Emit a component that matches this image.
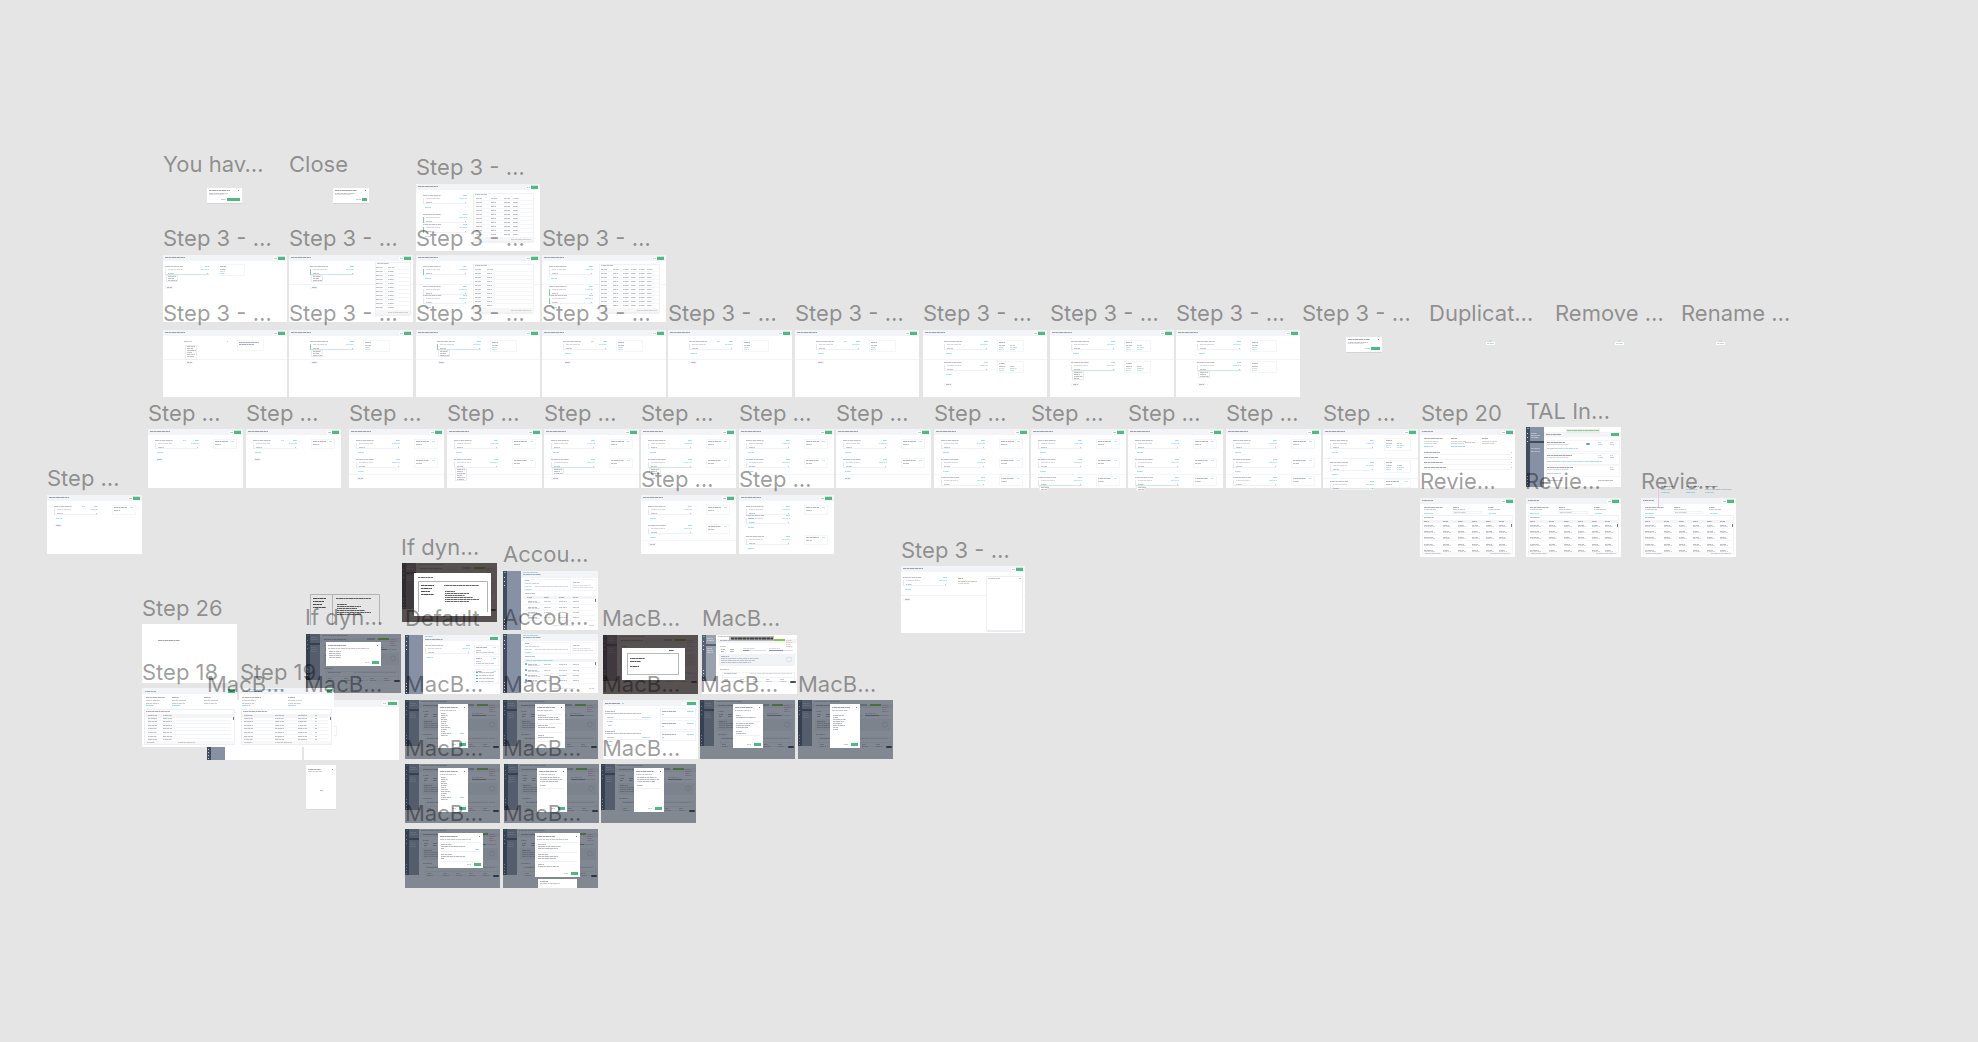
import React from "react";

const GREEN = "#4dbb7f";
const BLUE = "#5cc3dc";
const DARK = "#4b5261";

const DASHES = ["3 1 2 1 4 1", "2 1 4 1 1 1", "4 1 1 1 3 1", "1 1 3 1 2 1 3 1"];

/* A line of copy at overview zoom: a faint smear with darker short dashes. */
function Ink({ x, y, w, c = DARK, o = 0.45, h = 1 }) {
  if (!w) return null;
  return (
    <>
      <rect x={x} y={h > 1 ? y - 0.5 : y} width={w} height={h} fill={c} opacity={o * 0.4} />
      <line
        x1={x}
        x2={x + w}
        y1={y + 0.5}
        y2={y + 0.5}
        stroke={c}
        strokeOpacity={o * 0.4}
        strokeWidth={h}
        strokeDasharray={DASHES[(x * 3 + y + w) % 4]}
      />
    </>
  );
}

function Box({ x, y, w, h, f = "none", s, o = 1, r = 0 }) {
  return <rect x={s ? x + 0.5 : x} y={s ? y + 0.5 : y} width={w} height={h} fill={f} stroke={s} opacity={o} rx={r} />;
}

function Copy({ x, y, rows, c, o = 0.35, step = 2 }) {
  return rows.map((w, i) => <Ink key={i} x={x} y={y + i * step} w={w} c={c} o={o} />);
}

function Header({ w, title = 20 }) {
  return (
    <>
      <Box x={0} y={0} w={w} h={6} f="#f3f4f8" />
      <Ink x={2} y={2} w={title} o={0.75} />
      <Box x={w - 14} y={2} w={5} h={3} f="#fff" />
      <Ink x={w - 13} y={3} w={3} />
      <Box x={w - 9} y={1} w={7} h={4} f={GREEN} o={0.25} />
      <Box x={w - 9} y={2} w={7} h={3} f={GREEN} />
    </>
  );
}

/* Condition block: title, rule, field row, underline and link. */
function Block({ x, y, w = 44, green, bar, list, link = true, both }) {
  return (
    <>
      <Ink x={x} y={y} w={w < 40 ? 16 : 18} o={0.5} />
      <Ink x={x + w - 4} y={y} w={4} c={BLUE} o={0.9} />
      {both && <Ink x={x + w - 16} y={y} w={3} c={BLUE} o={0.7} />}
      <Box x={x} y={y + 3} w={1} h={6} f={bar ? GREEN : "#e6e8ec"} o={bar ? 0.7 : 1} />
      <Ink x={x + 3} y={y + 3} w={14} o={0.3} />
      <Ink x={x + w - 8} y={y + 3} w={8} c={BLUE} o={0.6} />
      <Ink x={x + 3} y={y + 7} w={6} o={0.45} />
      <Ink x={x + w - 2} y={y + 7} w={1} />
      <Box x={x + 1} y={y + 8} w={w - 1} h={1} f={green ? "#cdebdb" : "#f0f1f4"} />
      {link && !list && <Ink x={x + 2} y={y + 12} w={6} c={BLUE} o={0.8} />}
      {list && <List x={x + 1} y={y + 9} h={list} />}
    </>
  );
}

function List({ x, y, h, w = 11 }) {
  const rows = [8, 6, 9, 5, 8, 7].slice(0, Math.floor(h / 2));
  return (
    <>
      <Box x={x} y={y} w={w} h={h} f="#fff" s="#ececef" />
      <Copy x={x + 2} y={y + 1} rows={rows} o={0.5} />
    </>
  );
}

function SideCard({ x, y, w = 23, h = 9, cols }) {
  return (
    <>
      <Box x={x} y={y} w={w} h={h} s="#f5f6f7" />
      <Ink x={x + 2} y={y + 2} w={cols ? 6 : 13} o={0.6} />
      {!cols && <Ink x={x + w - 5} y={y + 2} w={3} c={BLUE} o={0.6} />}
      <Ink x={x + 2} y={y + 5} w={6} o={0.5} />
      {cols && (
        <>
          <Ink x={x + 2} y={y + 7} w={5} o={0.3} />
          <Ink x={x + 2} y={y + 9} w={5} c={BLUE} o={0.6} />
        </>
      )}
      {cols > 1 && (
        <>
          <Ink x={x + 13} y={y + 5} w={5} o={0.4} />
          <Ink x={x + 13} y={y + 7} w={7} o={0.3} />
          <Ink x={x + 13} y={y + 9} w={5} c={BLUE} o={0.6} />
        </>
      )}
    </>
  );
}

function Pill({ x, y }) {
  return (
    <>
      <Box x={x} y={y} w={7} h={2} s="#f6f6f8" />
      <Ink x={x + 2} y={y + 1} w={5} o={0.55} />
    </>
  );
}

/* Floating data table beside the editor. */
function TablePanel({ x, y, w, h, cols, step = 4, widths = 6 }) {
  const rows = [];
  for (let r = y + 9; r < y + h - 6; r += step) rows.push(r);
  return (
    <>
      <Box x={x} y={y + 1} w={w} h={h} f="#ededef" o={0.8} />
      <Box x={x} y={y} w={w} h={h - 1} f="#fff" s="#f0f1f3" />
      <Ink x={x + 2} y={y + 1} w={12} o={0.5} />
      {cols.map((c) => (
        <Ink key={c} x={x + c} y={y + 5} w={widths} o={0.45} />
      ))}
      {rows.map((r) => (
        <React.Fragment key={r}>
          <Box x={x + 1} y={r - 2} w={w - 1} h={1} f="#f5f6f7" />
          {cols.map((c, i) => (
            <Ink key={c} x={x + c} y={r} w={widths - (i % 2)} o={0.5} />
          ))}
        </React.Fragment>
      ))}
      <Box x={x + 1} y={y + h - 5} w={w - 1} h={4} f="#f6f6f7" />
      <Ink x={x + w - 22} y={y + h - 3} w={20} o={0.3} />
    </>
  );
}

function Wide({ children, divider = 29 }) {
  return (
    <>
      <Box x={0} y={0} w={124} h={67} f="#fff" />
      <Header w={124} />
      {divider > 0 && <Box x={0} y={divider} w={124} h={1} f="#f3f4f5" />}
      {children}
    </>
  );
}

function Editor({ count = 1, list, green, pill, third, doubled }) {
  return (
    <>
      <Box x={0} y={0} w={95} h={59} f="#fff" />
      <Header w={95} />
      <Block x={7} y={11} both={count === 1} />
      <SideCard x={65} y={10} />
      {doubled && <Block x={7} y={20} />}
      {count > 1 && (
        <>
          <Block x={7} y={doubled ? 41 : 30} list={third ? 0 : list} green={green && !third} />
          <SideCard x={65} y={doubled ? 40 : 29} />
          {!doubled && <Box x={0} y={45} w={95} h={1} f="#f5f6f7" />}
        </>
      )}
      {third && (
        <>
          <Block x={7} y={48} green={green} link={false} />
          <SideCard x={65} y={47} />
          {list > 0 && <List x={8} y={57} h={4} w={8} />}
        </>
      )}
      {pill > 0 && <Pill x={7} y={pill} />}
    </>
  );
}

function Review({ step = 4 }) {
  const cols = [4, 23, 38, 52, 66, 79];
  return (
    <>
      <Box x={0} y={0} w={95} h={59} f="#fff" />
      <Header w={95} title={11} />
      {[4, 33, 68].map((x) => (
        <React.Fragment key={x}>
          <Ink x={x} y={9} w={x === 4 ? 19 : 6} o={0.65} />
          <Ink x={x} y={11} w={12} o={0.4} />
        </React.Fragment>
      ))}
      <Box x={32} y={13} w={29} h={2} s="#f2f3f4" />
      <Ink x={34} y={14} w={12} o={0.35} />
      <Ink x={4} y={15} w={9} c={BLUE} o={0.8} />
      <Ink x={69} y={15} w={7} c={BLUE} o={0.8} />
      <Box x={2} y={17} w={90} h={39} s="#f0f2f4" />
      <Ink x={4} y={19} w={10} o={0.55} />
      <Box x={3} y={22} w={90} h={3} f="#f3f4f8" />
      {cols.map((c) => (
        <Ink key={c} x={c} y={23} w={5} o={0.6} />
      ))}
      {[27, 33, 39, 46, 52].map((y) => (
        <React.Fragment key={y}>
          {cols.map((c, i) => (
            <React.Fragment key={c}>
              <Ink x={c} y={y} w={i ? 6 : 9} o={0.5} />
              <Ink x={c} y={y + 1} w={i ? 8 : 11} o={0.3} />
            </React.Fragment>
          ))}
          <Box x={3} y={y + step - 1} w={90} h={1} f="#f8f8f9" />
        </React.Fragment>
      ))}
      <Box x={91} y={26} w={1} h={3} f="#777d88" />
      <Box x={3} y={54} w={90} h={3} f="#f8f8f9" />
      <Ink x={5} y={55} w={16} o={0.35} />
      <Ink x={70} y={55} w={20} o={0.35} />
    </>
  );
}

function Rail({ h, w = 14, nav = "#8791a5", strip = "#414d5e" }) {
  return (
    <>
      <Box x={0} y={0} w={w} h={h} f={nav} />
      <Box x={0} y={0} w={4} h={h} f={strip} />
      <Box x={1} y={1} w={2} h={1} f={GREEN} />
      {[6, 10, 14, h - 11, h - 8, h - 5, h - 2].map((y) => (
        <Box key={y} x={1} y={y} w={1} h={1} f="#fff" o={0.75} />
      ))}
    </>
  );
}

function Account({ checks }) {
  return (
    <>
      <Box x={0} y={0} w={95} h={59} f="#fff" />
      <Box x={18} y={0} w={77} h={7} f="#f3f4f8" />
      <Rail h={59} w={18} />
      <Ink x={20} y={1} w={15} c={BLUE} o={0.9} />
      <Ink x={20} y={3} w={18} o={0.65} />
      <Box x={21} y={8} w={46} h={11} s="#f5f6f7" />
      <Box x={69} y={8} w={24} h={11} s="#f5f6f7" />
      <Ink x={22} y={9} w={4} o={0.6} />
      <Copy x={22} y={12} rows={[14, 7]} step={3} />
      <Ink x={32} y={15} w={33} o={0.3} />
      <Ink x={70} y={11} w={7} o={0.5} />
      <Copy x={70} y={14} rows={[18, 20]} o={0.25} />
      <Ink x={22} y={18} w={7} c={BLUE} o={0.8} />
      <Ink x={22} y={22} w={10} o={0.5} />
      <Box x={21} y={25} w={72} h={3} f="#f3f4f8" />
      {checks ? (
        <Ink x={23} y={26} w={27} o={0.8} c={BLUE} />
      ) : (
        [24, 41, 56, 70].map((x) => <Ink key={x} x={x} y={26} w={5} o={0.55} />)
      )}
      {[30, 36, 41, 46].map((y) => (
        <React.Fragment key={y}>
          {checks && <Box x={22} y={y - 1} w={2} h={2} f={BLUE} />}
          <Ink x={25} y={y} w={9} o={0.5} />
          <Ink x={25} y={y + 1} w={12} o={0.3} />
          <Ink x={41} y={y} w={7} o={0.4} />
          <Ink x={56} y={y} w={8} o={0.45} />
          <Ink x={70} y={y} w={6} o={0.45} />
          <Box x={22} y={y + 3} w={70} h={1} f="#f5f6f7" />
        </React.Fragment>
      ))}
      <Box x={92} y={28} w={1} h={3} f="#777d88" />
      <Ink x={50} y={54} w={22} o={0.2} />
      <Ink x={86} y={54} w={5} o={0.35} />
    </>
  );
}

/* Account overview page, used plain and beneath scrims. */
function Overview() {
  return (
    <>
      <Box x={0} y={0} w={95} h={59} f="#fff" />
      <Box x={14} y={4} w={81} h={4} f="#f3f4f8" />
      <Rail h={46} nav="#99a1ae" strip="#566171" />
      <Box x={4} y={9} w={10} h={2} f="#566171" />
      <Copy x={5} y={3} rows={[6, 7]} c="#fff" o={0.6} />
      <Copy x={5} y={13} rows={[5, 6, 6]} c="#fff" o={0.5} />
      <Ink x={16} y={1} w={26} o={0.45} />
      <Ink x={18} y={5} w={22} o={0.6} />
      <Box x={61} y={4} w={8} h={2} f="#b9c0c9" />
      <Box x={72} y={4} w={11} h={2} f="#8cc44a" />
      <Copy x={84} y={5} rows={[6, 7, 5, 7]} c="#c96f6f" o={0.45} />
      <Ink x={18} y={11} w={6} />
      <Copy x={19} y={14} rows={[4, 3]} o={0.6} />
      <Copy x={28} y={14} rows={[4, 4]} o={0.6} />
      <Ink x={41} y={13} w={12} o={0.3} />
      <Box x={41} y={15} w={23} h={1} f="#dcdcec" />
      <Box x={41} y={15} w={6} h={1} f="#8f92bb" />
      <Ink x={67} y={13} w={11} o={0.3} />
      <Box x={67} y={15} w={24} h={1} f="#dcdcec" />
      <Box x={67} y={15} w={14} h={1} f="#8f92bb" />
      <Box x={17} y={19} w={76} h={12} f="#f1f3f7" />
      <Ink x={19} y={21} w={8} o={0.55} />
      <Copy x={19} y={23} rows={[38, 34, 30]} o={0.4} />
      <circle cx="87" cy="24.5" r="2.5" fill="none" stroke="#d9dfe7" />
      <Ink x={18} y={34} w={9} />
      <Box x={20} y={37} w={72} h={9} s="#f2f3f5" />
      <Ink x={22} y={38} w={13} o={0.5} />
      <Ink x={48} y={38} w={42} o={0.25} />
      <Box x={20} y={42} w={72} h={1} f="#f0f2f4" />
      {[22, 38, 51, 64, 78].map((x) => (
        <React.Fragment key={x}>
          <Ink x={x} y={44} w={4} o={0.4} />
          <Ink x={x} y={46} w={6} o={0.35} />
        </React.Fragment>
      ))}
      <Box x={88} y={46} w={6} h={2} f="#414d5e" r={1} />
    </>
  );
}

function Scrimmed({ tint = "#1c2636", o = 0.55, children }) {
  return (
    <>
      <Overview />
      <Box x={0} y={0} w={95} h={59} f={tint} o={o} />
      {children}
    </>
  );
}

function Modal({ x, y, w, h, rows, gap = 2, btn = true, rules = [], link }) {
  return (
    <>
      <Box x={x} y={y} w={w} h={h} f="#fff" />
      <Ink x={x + 2} y={y + 3} w={Math.min(18, w - 12)} o={0.8} />
      <Ink x={x + 2} y={y + 6} w={w - 14} o={0.45} />
      <Box x={x + w - 4} y={y + 3} w={1} h={1} f="#7c828d" />
      <Copy x={x + 3} y={y + 9} rows={rows} step={gap} o={0.55} />
      {rules.map((r) => (
        <Box key={r} x={x + 2} y={y + r} w={w - 5} h={1} f="#f0f1f3" />
      ))}
      {link > 0 && <Ink x={x + w - 8} y={y + link} w={4} c={BLUE} o={0.9} />}
      {btn && (
        <>
          <Ink x={x + w - 16} y={y + h - 4} w={4} o={0.4} />
          <Box x={x + w - 9} y={y + h - 5} w={7} h={3} f={GREEN} />
        </>
      )}
    </>
  );
}

function Dialog({ w, h, btn }) {
  return (
    <>
      <Box x={0} y={h} w={w} h={1} f="#d3d4d6" />
      <Box x={0} y={0} w={w} h={h} f="#fff" />
      <Ink x={2} y={2} w={w - 14} o={0.75} />
      <Ink x={2} y={5} w={w - 16} o={0.45} />
      <Ink x={2} y={6} w={w - 20} o={0.25} />
      <Box x={w - 4} y={2} w={1} h={1} f="#9297a0" />
      <Ink x={w - btn - 8} y={h - 4} w={5} o={0.4} />
      <Box x={w - btn - 2} y={h - 5} w={btn} h={3} f={GREEN} />
    </>
  );
}

function Tip() {
  return (
    <>
      <Box x={3} y={0} w={3} h={2} f="#c9dfe6" />
      <Box x={0} y={2} w={9} h={3} f="#fff" />
      <Ink x={1} y={3} w={7} o={0.35} />
    </>
  );
}

function Records({ wideCols }) {
  const cols = wideCols ? [5, 36, 59, 76] : [6, 21];
  return (
    <>
      <Box x={0} y={0} w={95} h={59} f="#fff" />
      <Box x={0} y={0} w={95} h={6} f="#f3f4f8" />
      <Ink x={3} y={3} w={wideCols ? 20 : 11} o={0.65} />
      {wideCols && <Ink x={10} y={1} w={34} c={BLUE} o={0.6} />}
      {wideCols ? <Box x={88} y={1} w={5} h={4} f={GREEN} /> : <Box x={86} y={1} w={7} h={4} f={GREEN} />}
      {(wideCols ? [3, 49] : [4, 30, 62]).map((x) => (
        <React.Fragment key={x}>
          <Ink x={x} y={9} w={x < 5 ? 19 : 7} o={0.65} />
          <Ink x={x} y={12} w={14} o={0.4} />
          <Ink x={x} y={15} w={13} o={0.4} />
          {x < 60 && <Ink x={x} y={17} w={8} c={BLUE} o={0.9} />}
        </React.Fragment>
      ))}
      <Box x={2} y={21} w={90} h={35} s="#edeff1" />
      <Ink x={4} y={23} w={24} o={0.7} />
      <Box x={3} y={26} w={90} h={3} f="#f3f4f8" />
      {[27, 30, 33, 37, 40, 44, 48, 51].map((y) => (
        <React.Fragment key={y}>
          {cols.map((c) => (
            <Ink key={c} x={c} y={y} w={c > 70 ? 2 : 9} o={0.5} />
          ))}
          <Box x={5} y={y + 2} w={84} h={1} f="#f4f5f6" />
        </React.Fragment>
      ))}
      <Box x={91} y={29} w={1} h={3} f="#777d88" />
      <Box x={3} y={53} w={90} h={3} f="#f8f8f9" />
      <Ink x={5} y={54} w={8} o={0.4} />
      <Ink x={36} y={54} w={17} o={0.4} />
    </>
  );
}

/* Two-column note: outline boxes with heavy copy. */
function Sketch({ x, y, w, h, split }) {
  return (
    <>
      <path
        d={`M${x + 0.5} ${y + h}V${y + 0.5}H${x + w - 0.5}V${y + h}`}
        fill="none"
        stroke="#b2b4b4"
      />
      {[4, 7, 10, 13].map((r, i) => (
        <Ink key={r} x={x + 3} y={y + r} w={split - 11 - (i % 3) * 2} c="#111" />
      ))}
      {[4, 7, 10, 13].map((r, i) => (
        <Ink key={r} x={x + 3} y={y + r} w={split - 11 - (i % 3) * 2} c="#111" o={0.9} />
      ))}
      <Ink x={x + split + 2} y={y + 4} w={w - split - 11} c="#111" o={1} />
      {[10, 12, 14, 16, 18, 20].map((r, i) => (
        <Ink key={r} x={x + split + 3} y={y + r} w={[10, 24, 20, 28, 34, 24][i]} c="#111" o={1} />
      ))}
    </>
  );
}

const WIDE_TABLE = [3, 18, 31, 40];

const DRAWINGS = {
  dialogLong: <Dialog w={35} h={15} btn={13} />,
  dialogShort: <Dialog w={36} h={15} btn={5} />,
  dialogMid: <Dialog w={36} h={15} btn={9} />,
  tip: <Tip />,
  tableTall: (
    <Wide divider={0}>
      <Block x={7} y={11} />
      <Block x={7} y={30} bar link={false} />
      <Block x={7} y={40} bar />
      <TablePanel x={57} y={9} w={60} h={49} cols={WIDE_TABLE} />
    </Wide>
  ),
  left: (
    <Wide divider={0}>
      <Block x={2} y={11} green list={6} />
      <SideCard x={55} y={9} w={26} h={11} cols={1} />
      <Pill x={2} y={31} />
    </Wide>
  ),
  tableNarrow: (
    <Wide>
      <Block x={21} y={11} green bar list={6} />
      <Pill x={21} y={31} />
      <TablePanel x={86} y={7} w={35} h={53} cols={[1, 13]} widths={7} />
    </Wide>
  ),
  tableMid: (
    <Wide>
      <Block x={7} y={11} bar />
      <Block x={7} y={31} link={false} />
      <Block x={7} y={40} />
      <TablePanel x={57} y={9} w={60} h={49} cols={[2, 14]} />
    </Wide>
  ),
  tableWide: (
    <Wide>
      <Block x={7} y={11} />
      <Block x={7} y={31} bar link={false} />
      <Block x={7} y={40} bar />
      <TablePanel x={57} y={9} w={60} h={49} cols={[2, 14, 24, 32, 40, 48]} />
    </Wide>
  ),
  wideList: (
    <Wide>
      <Ink x={21} y={11} w={8} />
      <Ink x={64} y={11} w={1} c={BLUE} o={1} />
      <List x={22} y={15} h={14} />
      <Pill x={22} y={31} />
      <Box x={74} y={10} w={26} h={10} s="#f6f7f8" />
      <Copy x={76} y={12} rows={[20, 15]} o={0.7} />
    </Wide>
  ),
  wideGreen: (
    <Wide>
      <Block x={21} y={11} green bar list={6} />
      <SideCard x={74} y={10} w={26} h={11} cols={1} />
      <Pill x={21} y={31} />
    </Wide>
  ),
  widePlain: (
    <Wide>
      <Block x={21} y={11} both />
      <SideCard x={74} y={10} w={26} h={11} cols={1} />
      <Pill x={21} y={31} />
    </Wide>
  ),
  wideTwo: (
    <Wide>
      <Block x={21} y={11} />
      <SideCard x={74} y={10} w={26} h={11} cols={2} />
      <Block x={21} y={32} />
      <SideCard x={74} y={31} w={26} h={11} cols={2} />
      <Pill x={21} y={53} />
    </Wide>
  ),
  wideTwoList: (
    <Wide>
      <Block x={21} y={11} />
      <SideCard x={74} y={10} w={26} h={11} cols={2} />
      <Block x={21} y={32} green list={8} />
      <SideCard x={74} y={31} w={26} h={11} cols={2} />
      <Pill x={21} y={53} />
    </Wide>
  ),
  wideTwoNarrow: (
    <Wide>
      <Block x={21} y={11} />
      <SideCard x={74} y={10} w={26} h={11} cols={1} />
      <Block x={21} y={32} green list={6} />
      <SideCard x={74} y={31} w={26} h={11} cols={1} />
      <Pill x={21} y={53} />
    </Wide>
  ),
  widePanel: (
    <Wide>
      <Block x={2} y={11} />
      <Pill x={2} y={32} />
      <Ink x={57} y={12} w={5} o={0.7} />
      <Ink x={57} y={15} w={19} o={0.6} c="#8d7a45" />
      <Ink x={57} y={17} w={11} o={0.35} />
      <Box x={86} y={64} w={35} h={2} f="#e9ebf2" />
      <Box x={85} y={10} w={36} h={54} f="#fff" s="#edeff3" />
      <Ink x={87} y={12} w={12} />
      <Ink x={118} y={12} w={2} />
    </Wide>
  ),
  one: <Editor pill={29} />,
  two: <Editor count={2} pill={48} />,
  twoList: <Editor count={2} list={12} />,
  twoGreen: <Editor count={2} list={6} green pill={48} />,
  twoEnd: <Editor count={2} />,
  three: <Editor count={3} third />,
  threeGreen: <Editor count={3} third green list={4} />,
  doubled: <Editor count={2} doubled />,
  cols: (
    <>
      <Box x={0} y={0} w={95} h={59} f="#fff" />
      <Header w={95} />
      {[11, 33, 52].map((y) => (
        <React.Fragment key={y}>
          <Block x={7} y={y} link={y < 50} />
          <SideCard x={61} y={y - 2} w={26} h={y < 50 ? 12 : 8} cols={y < 50 ? 2 : 0} />
        </React.Fragment>
      ))}
      <Box x={0} y={29} w={95} h={1} f="#f3f4f5" />
      <Box x={0} y={49} w={95} h={1} f="#f3f4f5" />
    </>
  ),
  summary: (
    <>
      <Box x={0} y={0} w={95} h={59} f="#fff" />
      <Header w={95} title={11} />
      {[4, 31, 62].map((x) => (
        <React.Fragment key={x}>
          <Ink x={x} y={9} w={x < 5 ? 19 : 6} o={0.65} />
          <Copy x={x} y={12} rows={[15, 13]} o={0.35} />
        </React.Fragment>
      ))}
      <Ink x={45} y={13} w={10} o={0.4} />
      <Ink x={4} y={17} w={9} c={BLUE} o={0.9} />
      <Ink x={31} y={17} w={14} c={BLUE} o={0.9} />
      {[23, 28, 33, 38].map((y, i) => (
        <React.Fragment key={y}>
          <Ink x={4} y={y} w={[16, 14, 19, 22][i]} o={0.75} />
          <Ink x={91} y={y} w={1} />
          <Box x={3} y={y + 2} w={89} h={1} f="#f3f4f5" />
        </React.Fragment>
      ))}
    </>
  ),
  tal: (
    <>
      <Box x={0} y={0} w={95} h={60} f="#fff" />
      <Box x={18} y={5} w={77} h={5} f="#f3f4f8" />
      <Rail h={60} w={18} />
      <Box x={4} y={14} w={14} h={2} f="#414d5e" />
      <Copy x={5} y={6} rows={[6, 9, 8]} c="#fff" o={0.6} />
      <Copy x={5} y={21} rows={[9, 9]} c="#fff" o={0.5} step={3} />
      <Box x={40} y={2} w={34} h={4} f="#e3f1e1" />
      <Ink x={41} y={3} w={32} c="#4c8a55" o={0.7} />
      <Ink x={20} y={7} w={15} o={0.75} />
      <Box x={85} y={6} w={8} h={3} f={GREEN} />
      {[13, 26, 38].map((y, i) => (
        <React.Fragment key={y}>
          <Box x={20} y={y} w={73} h={11} s="#f4f5f6" />
          <Ink x={21} y={y + 2} w={[18, 25, 26][i]} o={0.75} />
          <Ink x={21} y={y + 4} w={22} o={0.3} />
          <Ink x={21} y={y + 8} w={9} o={0.4} />
          <Ink x={30} y={y + 8} w={[22, 46, 5][i]} c={BLUE} o={0.8} />
          <Copy x={72} y={y + 2} rows={i < 2 ? [3, 5] : []} />
          <Copy x={84} y={y + 2} rows={[3, 4]} />
        </React.Fragment>
      ))}
      <Box x={60} y={16} w={4} h={2} f={GREEN} r={1} />
      <Ink x={21} y={53} w={16} o={0.5} />
      <Ink x={72} y={53} w={15} o={0.5} />
    </>
  ),
  review: <Review />,
  reviewGuide: (
    <>
      <Review />
      <Box x={17} y={-14} w={1} h={23} f="#eec3f2" />
      {[20, 45, 64].map((x) => (
        <React.Fragment key={x}>
          <Ink x={x} y={-12} w={13} o={0.65} />
          <Ink x={x} y={-9} w={x > 60 ? 27 : 11} o={0.35} />
          <Ink x={x} y={-6} w={9} c={BLUE} o={0.9} />
        </React.Fragment>
      ))}
    </>
  ),
  brownNote: (
    <Scrimmed tint="#241a1b" o={0.76}>
      <Box x={12} y={10} w={77} h={43} f="#fff" />
      <Ink x={16} y={14} w={15} c="#111" o={0.9} />
      <Sketch x={16} y={18} w={70} h={31} split={24} />
    </Scrimmed>
  ),
  brownBox: (
    <Scrimmed tint="#241a1b" o={0.76}>
      <Box x={19} y={13} w={63} h={32} f="#fff" />
      <Ink x={66} y={15} w={5} c="#111" o={1} />
      <Box x={24} y={18} w={51} h={21} s="#bbb" />
      <Ink x={27} y={23} w={15} c="#000" o={1} />
      <Ink x={27} y={26} w={11} c="#000" o={1} />
      <Ink x={27} y={31} w={9} c="#000" o={1} />
    </Scrimmed>
  ),
  noteSplit: (
    <>
      <Sketch x={0} y={0} w={70} h={31} split={24} />
      <Box x={22} y={0} w={1} h={31} f="#b2b4b4" />
    </>
  ),
  account: <Account />,
  accountChecks: <Account checks />,
  defaults: (
    <>
      <Box x={0} y={0} w={95} h={59} f="#fff" />
      <Box x={18} y={0} w={77} h={6} f="#f3f4f8" />
      <Rail h={59} w={18} />
      <Ink x={20} y={1} w={8} c={BLUE} o={0.9} />
      <Ink x={20} y={4} w={18} o={0.7} />
      <Box x={85} y={2} w={8} h={3} f={GREEN} />
      <Block x={20} y={10} w={45} />
      {[10, 21, 34].map((y, i) => (
        <React.Fragment key={y}>
          <Box x={69} y={y} w={24} h={[9, 9, 14][i]} s="#f4f5f6" />
          <Ink x={71} y={y + 2} w={[11, 6, 6][i]} o={0.6} />
          <Ink x={88} y={y + 2} w={3} c={BLUE} o={0.7} />
          {i < 2 && <Copy x={71} y={y + 5} rows={[5, 18]} o={0.4} />}
        </React.Fragment>
      ))}
      {[37, 40, 43, 46].map((y) => (
        <React.Fragment key={y}>
          <Box x={71} y={y} w={2} h={1} f="#3fb8c6" />
          <Ink x={74} y={y} w={15} o={0.45} />
        </React.Fragment>
      ))}
    </>
  ),
  overview: (
    <>
      <Overview />
      <Box x={27} y={1} w={45} h={5} f="#b9bbbd" />
      <Ink x={29} y={3} w={42} c="#000" o={1} h={2} />
    </>
  ),
  blank: (
    <>
      <Box x={0} y={0} w={95} h={59} f="#fff" />
      <Ink x={16} y={16} w={22} o={0.75} />
    </>
  ),
  records: <Records />,
  recordsWide: <Records wideCols />,
  behind: (
    <>
      <Box x={0} y={0} w={95} h={60} f="#fff" />
      <Rail h={60} w={18} />
    </>
  ),
  behindWide: (
    <>
      <Box x={0} y={0} w={95} h={60} f="#fff" />
      <Box x={0} y={0} w={95} h={7} f="#f3f4f8" />
      <Box x={78} y={2} w={5} h={3} f="#fff" />
      <Ink x={79} y={3} w={3} />
      <Box x={84} y={2} w={9} h={3} f={GREEN} />
      <Box x={22} y={26} w={10} h={9} s="#f0f2f4" />
    </>
  ),
  smallCard: (
    <>
      <Box x={0} y={0} w={30} h={45} f="#d8d9dc" />
      <Box x={0} y={0} w={30} h={44} f="#fff" />
      <Ink x={2} y={4} w={13} o={0.7} />
      <Ink x={2} y={6} w={14} o={0.35} />
      <Box x={26} y={4} w={1} h={1} f="#9297a0" />
      <Ink x={14} y={25} w={3} o={0.5} />
    </>
  ),
  modalWide: (
    <Scrimmed>
      <Modal x={20} y={8} w={55} h={24} rows={[12, 12, 12, 12]} />
    </Scrimmed>
  ),
  modalA: (
    <Scrimmed>
      <Modal x={33} y={4} w={30} h={44} rows={[5, 7, 5, 6, 6, 5, 7, 9, 6, 4, 10, 7]} link={29} />
    </Scrimmed>
  ),
  modalB: (
    <Scrimmed>
      <Modal
        x={32}
        y={4}
        w={30}
        h={44}
        rows={[0, 8, 20, 22, 0, 0, 10, 17, 0, 0, 0, 6, 16]}
        rules={[10, 19, 28, 37]}
        btn={false}
      />
    </Scrimmed>
  ),
  modalC: (
    <Scrimmed>
      <Modal x={33} y={4} w={30} h={44} rows={[0, 5, 20, 0, 0, 18, 14, 12, 0, 6, 10]} rules={[17, 31]} />
    </Scrimmed>
  ),
  modalD: (
    <Scrimmed>
      <Modal x={32} y={4} w={30} h={44} rows={[0, 11, 5, 13, 11, 9, 12, 5, 5]} />
    </Scrimmed>
  ),
  modalE: (
    <Scrimmed>
      <Modal x={33} y={4} w={30} h={44} rows={[20, 22, 18, 0, 6]} rules={[20]} />
    </Scrimmed>
  ),
  modalF: (
    <Scrimmed>
      <Modal x={33} y={4} w={45} h={35} rows={[0, 11, 24, 3, 0, 0, 11, 24, 3]} rules={[9, 18, 28]} link={16} />
    </Scrimmed>
  ),
  modalG: (
    <Scrimmed>
      <Modal
        x={32}
        y={4}
        w={45}
        h={44}
        rows={[0, 8, 23, 20, 0, 0, 10, 20, 18, 0, 0, 6, 21]}
        rules={[9, 19, 28]}
      />
      <Box x={35} y={50} w={39} h={9} f="#fff" />
      <Ink x={37} y={52} w={8} o={0.7} />
      <Ink x={37} y={54} w={20} o={0.45} />
    </Scrimmed>
  ),
  form: (
    <>
      <Box x={0} y={0} w={95} h={59} f="#fff" />
      <Box x={0} y={0} w={95} h={6} f="#f3f4f8" />
      <Ink x={2} y={3} w={15} o={0.8} />
      <Ink x={19} y={3} w={2} c={BLUE} o={0.9} />
      <Box x={79} y={2} w={4} h={3} f="#fff" />
      <Box x={84} y={2} w={9} h={3} f={GREEN} />
      {[11, 31].map((y) => (
        <React.Fragment key={y}>
          <Ink x={2} y={y} w={10} o={0.6} />
          <Ink x={2} y={y + 2} w={36} o={0.5} />
          <Ink x={4} y={y + 6} w={7} />
          <Ink x={39} y={y + 6} w={8} c={BLUE} o={0.8} />
          <Box x={3} y={y + 8} w={43} h={1} f="#f0f1f3" />
          <Ink x={4} y={y + 10} w={6} />
          <Ink x={5} y={y + 14} w={4} c={BLUE} o={0.9} />
        </React.Fragment>
      ))}
      {[8, 20, 31].map((y) => (
        <React.Fragment key={y}>
          <Box x={57} y={y} w={35} h={9} s="#f3f4f6" />
          <Ink x={59} y={y + 3} w={14} o={0.65} />
          <Ink x={84} y={y + 3} w={7} c={BLUE} o={0.9} />
          <Ink x={59} y={y + 6} w={2} />
        </React.Fragment>
      ))}
    </>
  ),
};

/* One entry per canvas frame: label, label x, label baseline, drawing, x, y. */
const FRAMES = [
  ["You hav…", 163, 172, "dialogLong", 207, 188],
  ["Close", 289, 172, "dialogShort", 333, 188],
  ["Step 3 - …", 416, 175, "tableTall", 416, 184],
  ["Step 3 - …", 163, 246, "left", 163, 255],
  ["Step 3 - …", 289, 246, "tableNarrow", 289, 255],
  ["Step 3 - …", 416, 246, "tableMid", 416, 255],
  ["Step 3 - …", 542, 246, "tableWide", 542, 255],
  ["Step 3 - …", 163, 321, "wideList", 163, 330],
  ["Step 3 - …", 289, 321, "wideGreen", 289, 330],
  ["Step 3 - …", 416, 321, "wideGreen", 416, 330],
  ["Step 3 - …", 542, 321, "widePlain", 542, 330],
  ["Step 3 - …", 668, 321, "widePlain", 668, 330],
  ["Step 3 - …", 795, 321, "widePlain", 795, 330],
  ["Step 3 - …", 923, 321, "wideTwo", 923, 330],
  ["Step 3 - …", 1050, 321, "wideTwoList", 1050, 330],
  ["Step 3 - …", 1176, 321, "wideTwoNarrow", 1176, 330],
  ["Step 3 - …", 1302, 321, "dialogMid", 1346, 337],
  ["Duplicat…", 1429, 321, "tip", 1486, 340],
  ["Remove …", 1555, 321, "tip", 1615, 340],
  ["Rename …", 1681, 321, "tip", 1716, 340],
  ["Step …", 148, 421, "one", 148, 429],
  ["Step …", 246, 421, "one", 246, 429],
  ["Step …", 349, 421, "two", 349, 429],
  ["Step …", 447, 421, "twoList", 447, 429],
  ["Step …", 544, 421, "twoGreen", 544, 429],
  ["Step …", 641, 421, "twoGreen", 641, 429],
  ["Step …", 739, 421, "twoEnd", 739, 429],
  ["Step …", 836, 421, "two", 836, 429],
  ["Step …", 934, 421, "three", 934, 429],
  ["Step …", 1031, 421, "threeGreen", 1031, 429],
  ["Step …", 1128, 421, "threeGreen", 1128, 429],
  ["Step …", 1226, 421, "three", 1226, 429],
  ["Step …", 1323, 421, "cols", 1323, 429],
  ["Step 20", 1421, 421, "summary", 1420, 429],
  ["TAL In…", 1526, 419, "tal", 1526, 427],
  ["Step …", 47, 486, "one", 47, 495],
  ["Step …", 641, 487, "two", 641, 495],
  ["Step …", 739, 487, "doubled", 739, 495],
  ["Revie…", 1420, 489, "review", 1420, 498],
  ["Revie…", 1525, 489, "review", 1526, 498],
  ["Revie…", 1641, 489, "reviewGuide", 1641, 498],
  ["Step 3 - …", 901, 558, "widePanel", 901, 566],
  ["If dyn…", 401, 555, "brownNote", 402, 563],
  ["Accou…", 503, 562, "account", 503, 571],
  ["", 0, 0, "noteSplit", 310, 594],
  ["If dyn…", 305, 625, "modalWide", 306, 634],
  ["Default", 405, 626, "defaults", 405, 635],
  ["Accou…", 503, 625, "accountChecks", 503, 634],
  ["MacB…", 602, 626, "brownBox", 603, 635],
  ["MacB…", 702, 626, "overview", 702, 635],
  ["Step 26", 142, 616, "blank", 142, 624],
  ["MacB…", 207, 692, "behind", 207, 700],
  ["MacB…", 304, 692, "behindWide", 304, 700],
  ["Step 18", 142, 680, "records", 142, 688],
  ["Step 19", 240, 680, "recordsWide", 239, 688],
  ["MacB…", 405, 692, "modalA", 405, 700],
  ["MacB…", 503, 692, "modalB", 503, 700],
  ["MacB…", 602, 692, "form", 603, 700],
  ["MacB…", 700, 692, "modalC", 700, 700],
  ["MacB…", 798, 692, "modalD", 798, 700],
  ["MacB…", 405, 756, "modalA", 405, 764],
  ["MacB…", 503, 756, "modalE", 504, 764],
  ["MacB…", 602, 756, "modalE", 601, 764],
  ["", 0, 0, "smallCard", 306, 765],
  ["MacB…", 405, 821, "modalF", 405, 829],
  ["MacB…", 503, 821, "modalG", 503, 829],
];

function Artboard({ frame }) {
  const [label, labelX, baseline, kind, x, y] = frame;
  return (
    <figure>
      <svg
        aria-hidden="true"
        className="absolute overflow-visible"
        width="124"
        height="67"
        style={{ left: x, top: y }}
      >
        {DRAWINGS[kind]}
      </svg>
      {label && (
        <figcaption
          className="absolute z-10 text-[22px] leading-7 whitespace-nowrap text-black/40"
          style={{ left: labelX, top: baseline - 22 }}
        >
          {label}
        </figcaption>
      )}
    </figure>
  );
}

export default function App() {
  return (
    <main className="relative min-h-screen w-full overflow-hidden bg-[#e5e5e5] font-['Inter',sans-serif]">
      {FRAMES.map((frame, i) => (
        <Artboard key={i} frame={frame} />
      ))}
    </main>
  );
}
